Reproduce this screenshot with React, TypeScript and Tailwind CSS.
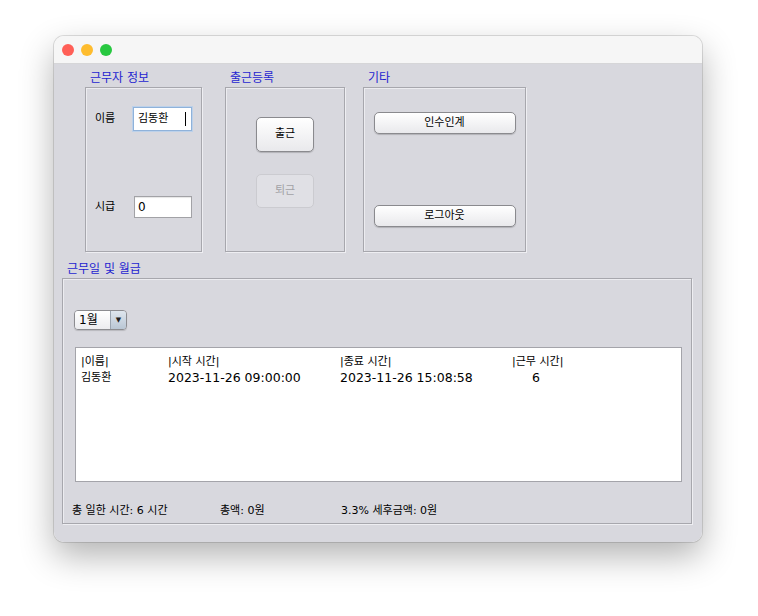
// 근무 관리 창 — 근무자 정보 / 출근등록 / 기타 / 근무일 및 월급
const FONT = "font-['DejaVu_Sans','Noto_Sans_CJK_KR',sans-serif]"

const rows = [
  { name: '김동환', start: '2023-11-26 09:00:00', end: '2023-11-26 15:08:58', hours: '6' },
]

function PanelTitle({ children, className = '' }: { children: React.ReactNode; className?: string }) {
  return (
    <div className={`h-[17px] leading-[17px] pl-[5px] text-[12px] text-[#1f1fd0] ${className}`}>{children}</div>
  )
}

function Button({ children, className = '', disabled = false }: { children: React.ReactNode; className?: string; disabled?: boolean }) {
  return (
    <div
      className={
        disabled
          ? `flex items-center justify-center rounded-[5px] border border-[#cbcbd0] bg-[#e0e0e5] text-[11px] text-[#a2a2a6] ${className}`
          : `flex items-center justify-center rounded-[5px] border border-[#8a8a8e] bg-gradient-to-b from-white to-[#e9e9ec] text-[11px] text-black shadow-[0_1px_1px_rgba(0,0,0,0.18)] ${className}`
      }
    >
      {children}
    </div>
  )
}

const box = 'border border-[#a7a7ad] shadow-[1px_1px_0_#eeeef2,inset_1px_1px_0_#ececf0]'

export default function App() {
  return (
    <div className={`min-h-[616px] bg-white pt-[36px] pl-[54px] ${FONT}`}>
      <div className="w-[648px] h-[506px] rounded-[10px] overflow-hidden flex flex-col shadow-[0_14px_34px_rgba(0,0,0,0.3),0_0_0_1px_rgba(0,0,0,0.12)]">
        {/* 타이틀 바 */}
        <div className="h-[28px] bg-[#f6f6f6] border-b border-[#d6d6d8] flex items-center pl-[8px] gap-[7px]">
          <span className="w-[12px] h-[12px] rounded-full bg-[#ff5f57]" />
          <span className="w-[12px] h-[12px] rounded-full bg-[#febc2e]" />
          <span className="w-[12px] h-[12px] rounded-full bg-[#28c840]" />
        </div>

        <div className="flex-1 bg-[#d8d8de] flex flex-col">
          {/* 상단 3개 패널 */}
          <div className="flex pl-[31px] pt-[6px]">
            <div className="flex flex-col w-[117px]">
              <PanelTitle>근무자 정보</PanelTitle>
              <div className={`h-[165px] ${box} pl-[9px] pt-[19px]`}>
                <div className="flex items-center">
                  <span className="w-[38px] text-[11px]">이름</span>
                  <div className="w-[59px] h-[24px] bg-white border border-[#8fb2da] shadow-[0_0_0_1px_#bcd1ea] flex items-center pl-[4px] text-[11px]">
                    김동환
                    <span className="ml-auto mr-[5px] w-px h-[14px] bg-black" />
                  </div>
                </div>
                <div className="flex items-center mt-[65px]">
                  <span className="w-[39px] text-[11px]">시급</span>
                  <div className="w-[58px] h-[22px] bg-white border border-[#a2a2a6] shadow-[inset_0_1px_1px_rgba(0,0,0,0.1)] flex items-center pl-[3px] text-[12px]">
                    0
                  </div>
                </div>
              </div>
            </div>

            <div className="flex flex-col w-[120px] ml-[23px]">
              <PanelTitle>출근등록</PanelTitle>
              <div className={`h-[165px] ${box} flex flex-col items-center pt-[29px] gap-[22px]`}>
                <Button className="w-[58px] h-[35px]">출근</Button>
                <Button className="w-[58px] h-[34px]" disabled>퇴근</Button>
              </div>
            </div>

            <div className="flex flex-col w-[163px] ml-[18px]">
              <PanelTitle className="pl-[4px]">기타</PanelTitle>
              <div className={`h-[165px] ${box} flex flex-col items-center pt-[24px] gap-[71px]`}>
                <Button className="w-[142px] h-[22px]">인수인계</Button>
                <Button className="w-[142px] h-[22px]">로그아웃</Button>
              </div>
            </div>
          </div>

          {/* 근무일 및 월급 */}
          <div className="flex flex-col pl-[8px] mt-[9px]">
            <PanelTitle>근무일 및 월급</PanelTitle>
            <div className={`w-[630px] h-[246px] ${box} flex flex-col`}>
              <div className="ml-[11px] mt-[31px] w-[53px] h-[20px] rounded-[4px] border border-[#8c8c90] flex overflow-hidden shadow-[0_1px_1px_rgba(0,0,0,0.15)]">
                <div className="flex-1 bg-gradient-to-b from-white to-[#ececef] flex items-center pl-[4px] text-[12px]">1월</div>
                <div className="w-[16px] border-l border-[#9aa4b0] bg-gradient-to-b from-[#dfe6ee] to-[#b9c6d4] flex items-center justify-center text-[7px] text-[#222]">▼</div>
              </div>

              <div className="ml-[12px] mt-[17px] w-[607px] h-[135px] bg-white border border-[#a4a4aa] pt-[6px] pl-[5px]">
                <div className="grid grid-cols-[87px_172px_172px_1fr] leading-[16px] text-[11px]">
                  <span>|이름|</span>
                  <span>|시작 시간|</span>
                  <span>|종료 시간|</span>
                  <span>|근무 시간|</span>
                  {rows.map((r) => (
                    <div key={r.start} className="contents">
                      <span>{r.name}</span>
                      <span className="text-[12.5px]">{r.start}</span>
                      <span className="text-[12.5px]">{r.end}</span>
                      <span className="text-[12.5px] pl-[20px]">{r.hours}</span>
                    </div>
                  ))}
                </div>
              </div>

              <div className="flex items-center mt-[21px] text-[11px]">
                <span className="ml-[9px] w-[148px]">총 일한 시간: 6 시간</span>
                <span className="w-[121px]">총액: 0원</span>
                <span>3.3% 세후금액: 0원</span>
              </div>
            </div>
          </div>
        </div>
      </div>
    </div>
  )
}
